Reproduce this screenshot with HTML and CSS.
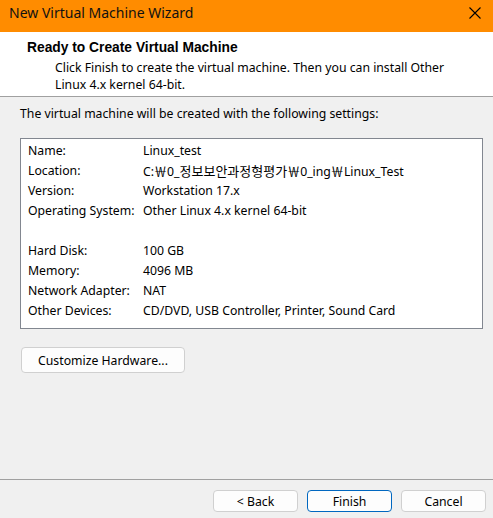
FILE: index.html
```html
<!DOCTYPE html>
<html>
<head>
<meta charset="utf-8">
<link rel="stylesheet" href="styles.css">
</head>
<body>
<div class="window">
  <div class="titlebar">
    <span class="title">New Virtual Machine Wizard</span>
    <svg class="close" width="12" height="12" viewBox="0 0 12 12"><path d="M0.5 0.5 L11.5 11.5 M11.5 0.5 L0.5 11.5" stroke="#000" stroke-width="1.1" fill="none"/></svg>
  </div>
  <div class="header">
    <div class="h-title">Ready to Create Virtual Machine</div>
    <div class="h-desc">Click Finish to create the virtual machine. Then you can install Other<br>Linux 4.x kernel 64-bit.</div>
  </div>
  <div class="content">
    <div class="intro">The virtual machine will be created with the following settings:</div>
    <div class="settings">
      <div class="k">Name:</div><div class="v">Linux_test</div>
      <div class="k">Location:</div><div class="v">C:<span class="kr">￦</span>0_<span class="kr">정보보안과정형평가￦</span>0_ing<span class="kr">￦</span>Linux_Test</div>
      <div class="k">Version:</div><div class="v">Workstation 17.x</div>
      <div class="k">Operating System:</div><div class="v">Other Linux 4.x kernel 64-bit</div>
      <div class="k">&nbsp;</div><div class="v">&nbsp;</div>
      <div class="k">Hard Disk:</div><div class="v">100 GB</div>
      <div class="k">Memory:</div><div class="v">4096 MB</div>
      <div class="k">Network Adapter:</div><div class="v">NAT</div>
      <div class="k">Other Devices:</div><div class="v">CD/DVD, USB Controller, Printer, Sound Card</div>
    </div>
    <button class="btn customize">Customize Hardware...</button>
  </div>
  <div class="footer">
    <button class="btn">&lt; Back</button>
    <button class="btn primary">Finish</button>
    <button class="btn">Cancel</button>
  </div>
</div>
</body>
</html>
```
FILE: styles.css
```css
html, body {
  margin: 0;
  padding: 0;
}
body {
  background: #f0f0f0;
  font-family: "Noto Sans", "Noto Sans CJK KR", sans-serif;
  font-size: 12.25px;
  color: #000;
  width: 493px;
  height: 518px;
  overflow: hidden;
}
.window {
  display: flex;
  flex-direction: column;
  height: 518px;
}
.titlebar {
  height: 32px;
  background: #ff8c00;
  display: flex;
  align-items: center;
  justify-content: space-between;
  padding: 0 12px 0 9px;
  box-sizing: border-box;
}
.title {
  font-size: 14px;
  color: #111;
  line-height: 20px;
  margin-top: -6px;
}
.close {
  margin-top: -6px;
}
.header {
  background: #fff;
  height: 65px;
  box-sizing: border-box;
  border-bottom: 1px solid #a0a0a0;
  padding-top: 8px;
}
.h-title {
  font-family: "Liberation Sans", Arial, sans-serif;
  font-weight: bold;
  font-size: 13.8px;
  line-height: 16px;
  padding-left: 27px;
}
.h-desc {
  padding-left: 55px;
  margin-top: 3px;
  line-height: 17px;
}
.content {
  flex: 1;
  padding: 9px 10px 0 20px;
  border-bottom: 1px solid #a0a0a0;
}
.intro {
  line-height: 16px;
}
.settings {
  margin-top: 16px;
  background: #fff;
  border: 1px solid #828790;
  height: 191px;
  box-sizing: border-box;
  padding: 2px 7px 0;
  display: grid;
  grid-template-columns: 115px auto;
  grid-auto-rows: 20px;
  align-content: start;
  line-height: 20px;
}
.kr {
  font-family: "Noto Sans CJK KR", sans-serif;
  font-size: 13px;
}
.btn {
  font-family: "Noto Sans", sans-serif;
  font-size: 12.25px;
  color: #000;
  background: #fdfdfd;
  border: 1px solid #d0d0d0;
  border-radius: 4px;
  padding: 0;
  box-sizing: border-box;
}
.customize {
  display: block;
  margin-top: 18px;
  margin-left: 1px;
  width: 164px;
  height: 26px;
}
.footer {
  height: 38px;
  display: flex;
  justify-content: flex-end;
  align-items: flex-start;
  gap: 9px;
  padding: 10px 7px 0 0;
  box-sizing: border-box;
}
.footer .btn {
  width: 85px;
  height: 22px;
}
.primary {
  border-color: #0067c0;
}
```
